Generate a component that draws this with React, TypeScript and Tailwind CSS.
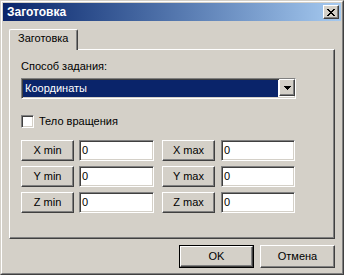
import React from 'react';

const raised =
  'border border-t-white border-l-white border-r-[#404040] border-b-[#404040] shadow-[inset_-1px_-1px_#808080]';
const sunken =
  'border border-t-[#808080] border-l-[#808080] border-r-white border-b-white shadow-[inset_1px_1px_#404040,inset_-1px_-1px_#d4d0c8]';

function AxisButton({ label }: { label: string }) {
  return (
    <div
      className={`w-[53px] h-[21px] flex items-center justify-center bg-[#d4d0c8] text-black ${raised}`}
    >
      {label}
    </div>
  );
}

function Edit({ value, width }: { value: string; width: string }) {
  return (
    <div className={`${width} h-[21px] flex items-center pl-[2px] bg-white text-black ${sunken}`}>
      {value}
    </div>
  );
}

function Row({ axis }: { axis: string }) {
  return (
    <div className="flex items-center">
      <AxisButton label={`${axis} min`} />
      <div className="ml-[5px]">
        <Edit value="0" width="w-[75px]" />
      </div>
      <div className="ml-[8px]">
        <AxisButton label={`${axis} max`} />
      </div>
      <div className="ml-[6px]">
        <Edit value="0" width="w-[74px]" />
      </div>
    </div>
  );
}

export default function App() {
  const axes = ['X', 'Y', 'Z'];

  return (
    <div className="w-[344px] h-[275px] bg-[#d4d0c8] border border-t-[#d4d0c8] border-l-[#d4d0c8] border-r-[#404040] border-b-[#404040] font-['Liberation_Sans',Arial,sans-serif] text-[11px] leading-[13px] text-black select-none">
      <div className="h-full flex flex-col p-px border border-t-white border-l-white border-r-[#808080] border-b-[#808080]">
        {/* title bar */}
        <div className="h-[18px] flex items-center justify-between pl-[4px] pr-[2px] bg-linear-to-r from-[#0a246a] to-[#a6caf0]">
          <span className="font-bold text-white text-[12px]">Заготовка</span>
          <div className={`w-[16px] h-[14px] flex items-center justify-center bg-[#d4d0c8] ${raised}`}>
            <svg width="8" height="7" viewBox="0 0 8 7" shapeRendering="crispEdges">
              <path
                d="M0 0h2v1h-2zM6 0h2v1h-2zM1 1h2v1h-2zM5 1h2v1h-2zM2 2h4v1h-4zM3 3h2v1h-2zM2 4h4v1h-4zM1 5h2v1h-2zM5 5h2v1h-2zM0 6h2v1h-2zM6 6h2v1h-2z"
                fill="#000"
              />
            </svg>
          </div>
        </div>

        {/* body */}
        <div className="flex-1 flex flex-col px-[6px] pt-[8px]">
          <div className="h-[20px] flex">
            <div className="relative z-10 w-[69px] h-[21px] pl-[8px] pt-[2px] bg-[#d4d0c8] border-l border-t border-r border-l-white border-t-white border-r-[#404040] rounded-tl-[2px] rounded-tr-[2px] shadow-[inset_-1px_0_#808080]">
              Заготовка
            </div>
          </div>
          <div className="h-[190px] pl-[11px] pt-[10px] border border-t-white border-l-white border-r-[#404040] border-b-[#404040] shadow-[inset_-1px_-1px_#808080]">
            <div>Способ задания:</div>

            <div className={`mt-[5px] w-[275px] h-[21px] flex bg-white ${sunken}`}>
              <div className="flex-1 m-px mt-px bg-[#0a246a] text-white pl-[2px] flex items-center">
                Координаты
              </div>
              <div className={`w-[16px] h-[17px] flex items-center justify-center bg-[#d4d0c8] ${raised}`}>
                <svg width="7" height="4" viewBox="0 0 7 4" shapeRendering="crispEdges">
                  <path d="M0 0h7v1h-7zM1 1h5v1h-5zM2 2h3v1h-3zM3 3h1v1h-1z" fill="#000" />
                </svg>
              </div>
            </div>

            <div className="mt-[16px] h-[13px] flex items-center">
              <div className={`w-[13px] h-[13px] bg-white ${sunken}`} />
              <span className="ml-[5px]">Тело вращения</span>
            </div>

            <div className="mt-[12px] flex flex-col gap-[5px]">
              {axes.map((axis) => (
                <Row key={axis} axis={axis} />
              ))}
            </div>
          </div>

          {/* footer buttons */}
          <div className="mt-[6px] flex justify-end gap-[6px]">
            <div className="border border-black">
              <div className={`w-[73px] h-[21px] flex items-center justify-center bg-[#d4d0c8] ${raised}`}>
                OK
              </div>
            </div>
            <div className={`w-[75px] h-[23px] flex items-center justify-center bg-[#d4d0c8] ${raised}`}>
              Отмена
            </div>
          </div>
        </div>
      </div>
    </div>
  );
}
